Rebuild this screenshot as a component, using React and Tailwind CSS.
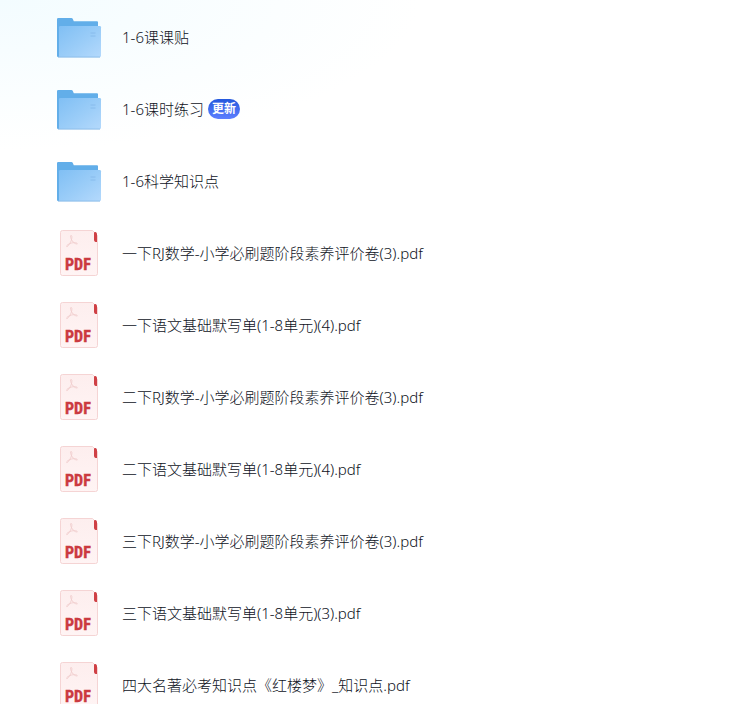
import React from 'react'

const files = [
  { type: 'folder', name: '1-6课课贴' },
  { type: 'folder', name: '1-6课时练习', updated: true },
  { type: 'folder', name: '1-6科学知识点' },
  { type: 'pdf', name: '一下RJ数学-小学必刷题阶段素养评价卷(3).pdf' },
  { type: 'pdf', name: '一下语文基础默写单(1-8单元)(4).pdf' },
  { type: 'pdf', name: '二下RJ数学-小学必刷题阶段素养评价卷(3).pdf' },
  { type: 'pdf', name: '二下语文基础默写单(1-8单元)(4).pdf' },
  { type: 'pdf', name: '三下RJ数学-小学必刷题阶段素养评价卷(3).pdf' },
  { type: 'pdf', name: '三下语文基础默写单(1-8单元)(3).pdf' },
  { type: 'pdf', name: '四大名著必考知识点《红楼梦》_知识点.pdf' },
]

function FolderIcon() {
  return (
    <svg className="size-12 shrink-0" viewBox="0 -1 48 48" aria-hidden="true">
      <defs>
        <linearGradient id="folderFront" x1="0" y1="0" x2="1" y2="1">
          <stop offset="0" stopColor="#80bff4" />
          <stop offset="0.55" stopColor="#9bcdf8" />
          <stop offset="1" stopColor="#b4d9fc" />
        </linearGradient>
      </defs>
      <path d="M2 5.2Q2 4 3.2 4H16.4Q17.3 4 17.7 4.8L18.8 7.3H42Q43 7.3 43 8.3V43H3Q2 43 2 42Z" fill="#62aee9" />
      <path d="M4 13.2Q4 12 5.2 12H44.8Q46 12 46 13.2V41.8Q46 43 44.8 43H4Z" fill="url(#folderFront)" />
      <path d="M3 43.1H45" stroke="#8abce9" strokeWidth="1" />
      <path d="M35.5 19H40.5M35.5 22H40.5" stroke="#84b8e8" strokeWidth="0.8" />
    </svg>
  )
}

function PdfIcon() {
  return (
    <svg className="size-12 shrink-0" viewBox="0 0 48 48" aria-hidden="true">
      <defs>
        <linearGradient id="pdfPage" x1="0" y1="0" x2="0" y2="1">
          <stop offset="0" stopColor="#fdeeee" />
          <stop offset="1" stopColor="#fff4f4" />
        </linearGradient>
      </defs>
      <path d="M7.5 1.5H37.5L42.5 6.5V44.5Q42.5 46.5 40.5 46.5H7.5Q5.5 46.5 5.5 44.5V3.5Q5.5 1.5 7.5 1.5Z" fill="url(#pdfPage)" stroke="#f5d4d4" />
      <path d="M39 4Q39 3 40 3H40.5Q42 3.5 42 5V13H40.5Q39 12.5 39 11Z" fill="#cf4045" />
      <path
        d="M15.8 6.5C17.4 6 17 9.5 16 12.2C14.8 15 12.6 17.9 11.8 17.6C10.8 17.1 13.2 14.9 16.2 14.1C19 13.3 22.5 13.7 22.3 14.7C22 15.7 18.8 14.1 17.3 12C15.9 9.9 14.9 6.8 15.8 6.5Z"
        fill="none"
        stroke="#f0cdcd"
        strokeWidth="0.9"
      />
      <text x="10" y="41" fill="#cb3a40" stroke="#cb3a40" strokeWidth="0.4" fontFamily="'Liberation Sans Narrow', 'Roboto Condensed', Roboto, sans-serif" fontSize="16" fontWeight="700">PDF</text>
    </svg>
  )
}

function FileRow({ file }) {
  return (
    <li>
      <a href="#" className="flex h-18 items-center pr-6 pl-[55px] text-[15px] leading-6 text-[#0e121c]">
        {file.type === 'folder' ? <FolderIcon /> : <PdfIcon />}
        <span className="ml-[19px] font-light">{file.name}</span>
        {file.updated && (
          <span className="ml-1 rounded-full bg-linear-to-b from-[#2459dd] to-[#5d7fff] px-1 text-xs leading-5 font-bold text-white">
            更新
          </span>
        )}
      </a>
    </li>
  )
}

function App() {
  return (
    <div className="h-screen overflow-hidden bg-white bg-[radial-gradient(ellipse_420px_150px_at_top_left,#f3fcff,#ffffff)] font-['Noto_Sans','Noto_Sans_CJK_SC',sans-serif]">
      <ul className="pt-px">
        {files.map((file) => (
          <FileRow key={file.name} file={file} />
        ))}
      </ul>
    </div>
  )
}

export default App
